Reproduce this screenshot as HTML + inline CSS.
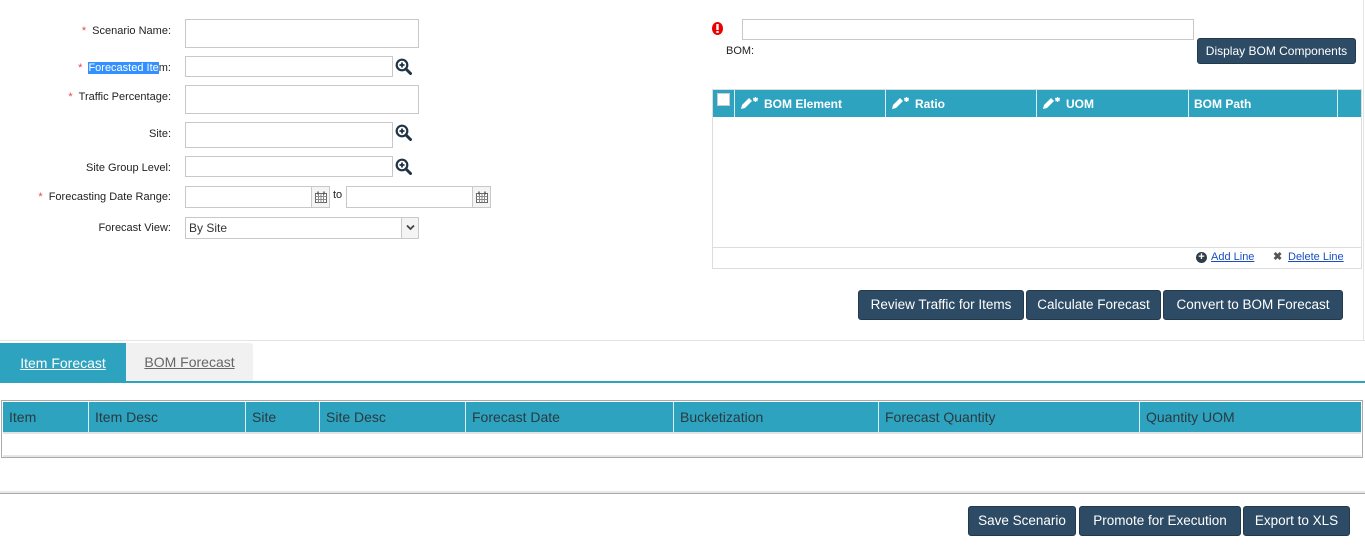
<!DOCTYPE html>
<html><head><meta charset="utf-8"><style>
*{box-sizing:border-box;margin:0;padding:0}
body{width:1365px;height:545px;background:#fff;font-family:"Liberation Sans",sans-serif;position:relative;overflow:hidden;color:#222}
.a{position:absolute}
.lbl{position:absolute;right:1194px;font-size:11px;color:#222;text-align:right;white-space:nowrap}
.req{color:#e0464a;margin-right:6px}
.inp{position:absolute;border:1px solid #c8c8c8;background:#fff}
.btn{position:absolute;background:#2d4b64;color:#fff;border-radius:3px;font-size:13.5px;text-align:center;white-space:nowrap;border:1px solid #23394c}
.th{position:absolute;top:0;height:100%;color:#fff;font-weight:bold;font-size:12px;line-height:28px;border-left:1px solid #d8eef3;padding-left:5px;white-space:nowrap}
.th svg{vertical-align:-2px;margin-right:5px}
.th2{position:absolute;top:0;height:100%;color:#2a3a40;font-size:14px;line-height:31px;border-left:1px solid #d8eef3;padding-left:6px}
.mag{position:absolute;width:17px;height:17px}
.cal{position:absolute;right:0;top:0;width:18px;height:20px;border-left:1px solid #c8c8c8;background:#f4f4f4}
</style></head><body>

<div class="lbl" style="top:25px"><span class="req">*</span>Scenario Name:</div>
<div class="inp" style="left:185px;top:19px;width:234px;height:29px"></div>

<div class="lbl" style="top:62px"><span class="req">*</span><span style="background:#3390ff;color:#fff">Forecasted Ite</span>m:</div>
<div class="inp" style="left:185px;top:56px;width:208px;height:21px"></div>
<svg class="mag" style="left:395px;top:58px" viewBox="0 0 17 17"><circle cx="7" cy="7" r="5.3" fill="none" stroke="#1f3344" stroke-width="2.2"/><path d="M11 11l4.5 4.5" stroke="#1f3344" stroke-width="3" stroke-linecap="round"/><path d="M4.5 7h5M7 4.5v5" stroke="#1f3344" stroke-width="1.8"/></svg>

<div class="lbl" style="top:91px"><span class="req">*</span>Traffic Percentage:</div>
<div class="inp" style="left:185px;top:85px;width:234px;height:29px"></div>

<div class="lbl" style="top:128px">Site:</div>
<div class="inp" style="left:185px;top:122px;width:208px;height:26px"></div>
<svg class="mag" style="left:395px;top:124px" viewBox="0 0 17 17"><circle cx="7" cy="7" r="5.3" fill="none" stroke="#1f3344" stroke-width="2.2"/><path d="M11 11l4.5 4.5" stroke="#1f3344" stroke-width="3" stroke-linecap="round"/><path d="M4.5 7h5M7 4.5v5" stroke="#1f3344" stroke-width="1.8"/></svg>

<div class="lbl" style="top:162px">Site Group Level:</div>
<div class="inp" style="left:185px;top:156px;width:208px;height:21px"></div>
<svg class="mag" style="left:395px;top:158px" viewBox="0 0 17 17"><circle cx="7" cy="7" r="5.3" fill="none" stroke="#1f3344" stroke-width="2.2"/><path d="M11 11l4.5 4.5" stroke="#1f3344" stroke-width="3" stroke-linecap="round"/><path d="M4.5 7h5M7 4.5v5" stroke="#1f3344" stroke-width="1.8"/></svg>

<div class="lbl" style="top:191px"><span class="req">*</span>Forecasting Date Range:</div>
<div class="inp" style="left:185px;top:186px;width:145px;height:22px"><div class="cal"><svg class="a" style="left:3px;top:4px" width="12" height="12" viewBox="0 0 12 12"><rect x="0.5" y="2.5" width="11" height="9" fill="#fff" stroke="#666"/><path d="M0.5 5.5h11M0.5 8.5h11M3.5 2.5v9M6 2.5v9M8.5 2.5v9" stroke="#888" stroke-width="1"/><path d="M3 0.5v3M9 0.5v3" stroke="#555" stroke-width="1.4"/></svg></div></div>
<div class="a" style="left:333px;top:189px;font-size:11px">to</div>
<div class="inp" style="left:346px;top:186px;width:145px;height:22px"><div class="cal"><svg class="a" style="left:3px;top:4px" width="12" height="12" viewBox="0 0 12 12"><rect x="0.5" y="2.5" width="11" height="9" fill="#fff" stroke="#666"/><path d="M0.5 5.5h11M0.5 8.5h11M3.5 2.5v9M6 2.5v9M8.5 2.5v9" stroke="#888" stroke-width="1"/><path d="M3 0.5v3M9 0.5v3" stroke="#555" stroke-width="1.4"/></svg></div></div>

<div class="lbl" style="top:222px">Forecast View:</div>
<div class="inp" style="left:185px;top:217px;width:234px;height:22px;font-size:12px;line-height:21px;padding-left:3px;color:#333">By Site<div class="a" style="right:0;top:0;width:17px;height:20px;border-left:1px solid #c8c8c8;background:#f4f4f4"><svg class="a" style="left:4px;top:6px" width="9" height="7" viewBox="0 0 9 7"><path d="M1 1.5l3.5 3.5 3.5-3.5" fill="none" stroke="#444" stroke-width="1.8"/></svg></div></div>

<!-- right -->
<svg class="a" style="left:711px;top:21px" width="13" height="15" viewBox="0 0 13 15"><ellipse cx="6.5" cy="7.5" rx="5.5" ry="6.5" fill="#e00"/><rect x="5.3" y="3" width="2.4" height="6" fill="#fff"/><rect x="5.3" y="10" width="2.4" height="2" fill="#fff"/></svg>
<div class="inp" style="left:742px;top:19px;width:452px;height:21px"></div>
<div class="a" style="left:726px;top:45px;font-size:11px">BOM:</div>
<div class="btn" style="left:1197px;top:38px;width:159px;height:26px;font-size:12px;line-height:24px">Display BOM Components</div>

<div class="a" style="left:712px;top:89px;width:650px;height:180px;border:1px solid #ddd">
 <div class="a" style="left:0;top:0;width:648px;height:27px;background:#2ea3bf">
  <div class="a" style="left:4px;top:3px;width:13px;height:13px;background:#fff;border:1px solid #ccc"></div>
  <div class="th" style="left:21px;width:151px"><svg width="19" height="13" viewBox="0 0 19 13"><path d="M1 12l1-4 7-7 3 3-7 7z" fill="#fff"/><path d="M13 1h5M15.5 -1v5M13.5 0l4 3M13.5 3l4-3" stroke="#fff" stroke-width="1.2" transform="translate(0,1)"/></svg>BOM Element</div>
  <div class="th" style="left:172px;width:151px"><svg width="19" height="13" viewBox="0 0 19 13"><path d="M1 12l1-4 7-7 3 3-7 7z" fill="#fff"/><path d="M13 1h5M15.5 -1v5M13.5 0l4 3M13.5 3l4-3" stroke="#fff" stroke-width="1.2" transform="translate(0,1)"/></svg>Ratio</div>
  <div class="th" style="left:323px;width:152px"><svg width="19" height="13" viewBox="0 0 19 13"><path d="M1 12l1-4 7-7 3 3-7 7z" fill="#fff"/><path d="M13 1h5M15.5 -1v5M13.5 0l4 3M13.5 3l4-3" stroke="#fff" stroke-width="1.2" transform="translate(0,1)"/></svg>UOM</div>
  <div class="th" style="left:475px;width:150px;border-right:1px solid #d8eef3">BOM Path</div>
 </div>
 <div class="a" style="left:0;top:157px;width:648px;border-top:1px solid #ddd;height:21px;font-size:11px">
  <div class="a" style="left:483px;top:4px;width:11px;height:11px;border-radius:50%;background:#2d3d4b;color:#fff;font-size:11px;line-height:10px;text-align:center;font-weight:bold">+</div>
  <div class="a" style="left:498px;top:3px;color:#1a4ec0;text-decoration:underline">Add Line</div>
  <div class="a" style="left:560px;top:2px;color:#555;font-weight:bold">&#10006;</div>
  <div class="a" style="left:575px;top:3px;color:#1a4ec0;text-decoration:underline">Delete Line</div>
 </div>
</div>

<div class="btn" style="left:858px;top:290px;width:166px;height:30px;line-height:28px">Review Traffic for Items</div>
<div class="btn" style="left:1026px;top:290px;width:135px;height:30px;line-height:28px">Calculate Forecast</div>
<div class="btn" style="left:1163px;top:290px;width:180px;height:30px;line-height:28px">Convert to BOM Forecast</div>

<div class="a" style="left:1363px;top:0;width:1px;height:340px;background:#e4e4e4"></div>
<div class="a" style="left:0;top:340px;width:1365px;height:1px;background:#e4e4e4"></div>

<!-- tabs -->
<div class="a" style="left:0;top:343px;width:126px;height:39px;background:#2ea3bf;color:#fff;font-size:14px;text-align:center;line-height:40px;text-decoration:underline">Item Forecast</div>
<div class="a" style="left:126px;top:343px;width:127px;height:38px;background:#f1f1f1;color:#666;font-size:14px;text-align:center;line-height:38px;text-decoration:underline;border-radius:0 3px 0 0">BOM Forecast</div>
<div class="a" style="left:0;top:381px;width:1365px;height:2px;background:#2ea3bf"></div>

<div class="a" style="left:1px;top:400px;width:1362px;height:58px;border:1px solid #aaa;background:#fff">
 <div class="a" style="left:1px;top:1px;width:1358px;height:32px;background:#2ea3bf;border-bottom:2px solid #e2e2e2">
  <div class="th2" style="left:0;width:85px;border-left:none">Item</div>
  <div class="th2" style="left:85px;width:157px">Item Desc</div>
  <div class="th2" style="left:242px;width:74px">Site</div>
  <div class="th2" style="left:316px;width:146px">Site Desc</div>
  <div class="th2" style="left:462px;width:208px">Forecast Date</div>
  <div class="th2" style="left:670px;width:205px">Bucketization</div>
  <div class="th2" style="left:875px;width:261px">Forecast Quantity</div>
  <div class="th2" style="left:1136px;width:222px">Quantity UOM</div>
 </div>
 <div class="a" style="left:1px;bottom:0;width:1358px;height:2px;background:#e6e6e6"></div>
</div>

<div class="a" style="left:0;top:491px;width:1365px;height:2px;background:#e8e8e8"></div>
<div class="a" style="left:0;top:493px;width:1365px;height:1px;background:#a8a8a8"></div>

<div class="btn" style="left:968px;top:506px;width:108px;height:30px;line-height:28px">Save Scenario</div>
<div class="btn" style="left:1079px;top:506px;width:162px;height:30px;line-height:28px">Promote for Execution</div>
<div class="btn" style="left:1243px;top:506px;width:107px;height:30px;line-height:28px">Export to XLS</div>

</body></html>
